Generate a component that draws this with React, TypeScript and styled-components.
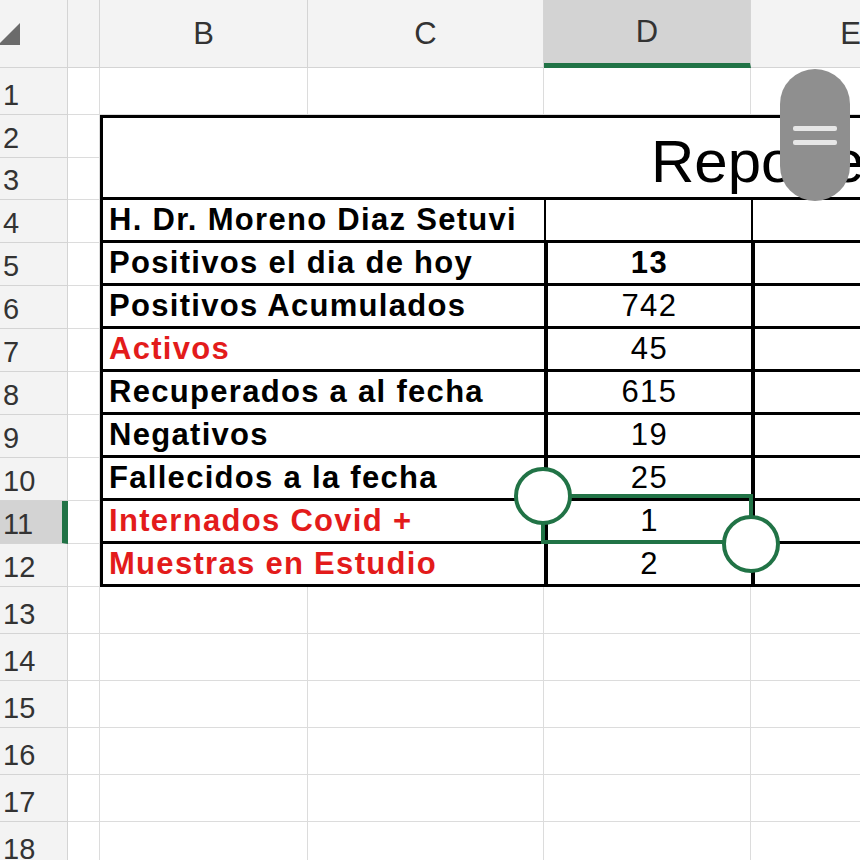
import React from "react";
import styled, { createGlobalStyle, css } from "styled-components";

const Global = createGlobalStyle`
  body { margin: 0; background: #fff; font-family: "Liberation Sans", Arial, sans-serif; }
`;

const GREEN = "#217346";
const COLS = ["", "B", "C", "D", "E"];

const rows = [
  { label: "H. Dr. Moreno Diaz Setuvi", value: "", red: false },
  { label: "Positivos el dia de hoy", value: "13", red: false, bold: true },
  { label: "Positivos Acumulados", value: "742", red: false },
  { label: "Activos", value: "45", red: true },
  { label: "Recuperados a al fecha", value: "615", red: false },
  { label: "Negativos", value: "19", red: false },
  { label: "Fallecidos a la fecha", value: "25", red: false },
  { label: "Internados Covid +", value: "1", red: true },
  { label: "Muestras en Estudio", value: "2", red: true },
];

export default function App() {
  const gridCells: React.ReactNode[] = [];
  for (let r = 2; r <= 19; r++) {
    for (let c = 2; c <= 6; c++) {
      gridCells.push(<GridCell key={`${r}-${c}`} $r={r} $c={c} />);
    }
  }
  return (
    <>
      <Global />
      <Page>
        <Sheet>
          <Corner>
            <svg width="26" height="26" viewBox="0 0 26 26">
              <polygon points="24,2 24,24 2,24" fill="#6b6b6b" />
            </svg>
          </Corner>
          {COLS.map((h, i) => (
            <ColHead key={i} $c={i + 2} $active={h === "D"}>{h}</ColHead>
          ))}
          {Array.from({ length: 18 }, (_, i) => (
            <RowHead key={i} $r={i + 2} $active={i + 1 === 11}>{i + 1}</RowHead>
          ))}
          {gridCells}
          <Title>Reporte</Title>
          {rows.map((row, i) => (
            <React.Fragment key={i}>
              <Label $r={i + 5} $red={row.red}>{row.label}</Label>
              <Value $r={i + 5} $bold={row.bold} $first={i === 0}>{row.value}</Value>
              <EValue $r={i + 5} $first={i === 0} />
            </React.Fragment>
          ))}
          <Selection />
          <Handle style={{ left: 514, top: 467 }} />
          <Handle style={{ left: 722, top: 515 }} />
          <Scroll>
            <ScrollLine />
            <ScrollLine />
          </Scroll>
        </Sheet>
      </Page>
    </>
  );
}

const Page = styled.div`
  width: 860px;
  height: 860px;
  overflow: hidden;
`;

const Sheet = styled.div`
  position: relative;
  display: grid;
  grid-template-columns: 68px 32px 208px 236px 207px 200px;
  grid-template-rows: 68px 47px 43px 42px repeat(9, 43px) repeat(6, 47px);
`;

const place = (r: number, c: number) => css`
  grid-row: ${r};
  grid-column: ${c};
`;

const Corner = styled.div`
  grid-row: 1;
  grid-column: 1;
  background: #f3f3f3;
  border-right: 1px solid #d4d4d4;
  border-bottom: 1px solid #d4d4d4;
  display: flex;
  align-items: center;
  margin-left: -4px;
`;

const ColHead = styled.div<{ $c: number; $active: boolean }>`
  ${(p) => place(1, p.$c)};
  background: ${(p) => (p.$active ? "#d3d3d3" : "#f3f3f3")};
  border-right: 1px solid #d4d4d4;
  border-bottom: ${(p) => (p.$active ? `5px solid ${GREEN}` : "1px solid #d4d4d4")};
  display: flex;
  align-items: center;
  justify-content: center;
  font-size: 31px;
  color: #333;
`;

const RowHead = styled.div<{ $r: number; $active: boolean }>`
  ${(p) => place(p.$r, 1)};
  background: ${(p) => (p.$active ? "#d3d3d3" : "#f3f3f3")};
  border-bottom: 1px solid #d4d4d4;
  border-right: ${(p) => (p.$active ? `6px solid ${GREEN}` : "1px solid #d4d4d4")};
  display: flex;
  align-items: flex-end;
  padding-bottom: 2px;
  padding-left: 3px;
  font-size: 29px;
  color: #333;
`;

const GridCell = styled.div<{ $r: number; $c: number }>`
  ${(p) => place(p.$r, p.$c)};
  border-right: 1px solid #dcdcdc;
  border-bottom: 1px solid #dcdcdc;
`;

const Title = styled.div`
  grid-row: 3 / 5;
  grid-column: 3 / 7;
  border-top: 3px solid #000;
  border-left: 3px solid #000;
  border-bottom: 3px solid #000;
  background: #fff;
  font-size: 60px;
  display: flex;
  align-items: center;
  padding-left: 548px;
  padding-top: 8px;
  white-space: nowrap;
  overflow: hidden;
`;

const Label = styled.div<{ $r: number; $red: boolean }>`
  grid-row: ${(p) => p.$r};
  grid-column: 3 / 5;
  background: #fff;
  border-left: 3px solid #000;
  border-bottom: 3px solid #000;
  color: ${(p) => (p.$red ? "#e31b1b" : "#000")};
  font-weight: bold;
  font-size: 31px;
  letter-spacing: 1.3px;
  display: flex;
  align-items: center;
  padding-left: 6px;
  white-space: nowrap;
  overflow: hidden;
`;

const Value = styled.div<{ $r: number; $bold?: boolean; $first: boolean }>`
  grid-row: ${(p) => p.$r};
  grid-column: 5;
  background: #fff;
  border-left: ${(p) => (p.$first ? "2px" : "4px")} solid #000;
  border-bottom: 3px solid #000;
  font-weight: ${(p) => (p.$bold ? "bold" : "normal")};
  font-size: 31px;
  letter-spacing: 1.5px;
  display: flex;
  align-items: center;
  justify-content: center;
`;

const EValue = styled.div<{ $r: number; $first: boolean }>`
  grid-row: ${(p) => p.$r};
  grid-column: 6;
  background: #fff;
  border-left: ${(p) => (p.$first ? "2px" : "4px")} solid #000;
  border-bottom: 3px solid #000;
`;

const Selection = styled.div`
  position: absolute;
  left: 541px;
  top: 494px;
  width: 212px;
  height: 50px;
  box-sizing: border-box;
  border: 4px solid ${GREEN};
`;

const Handle = styled.div`
  position: absolute;
  width: 58px;
  height: 58px;
  border-radius: 50%;
  background: #fff;
  border: 4px solid ${GREEN};
  box-sizing: border-box;
`;

const Scroll = styled.div`
  position: absolute;
  left: 780px;
  top: 69px;
  width: 70px;
  height: 132px;
  border-radius: 35px;
  background: #8f8f8f;
  display: flex;
  flex-direction: column;
  align-items: center;
  justify-content: center;
  gap: 9px;
`;

const ScrollLine = styled.div`
  width: 44px;
  height: 5px;
  border-radius: 2px;
  background: #e6e6e6;
`;
